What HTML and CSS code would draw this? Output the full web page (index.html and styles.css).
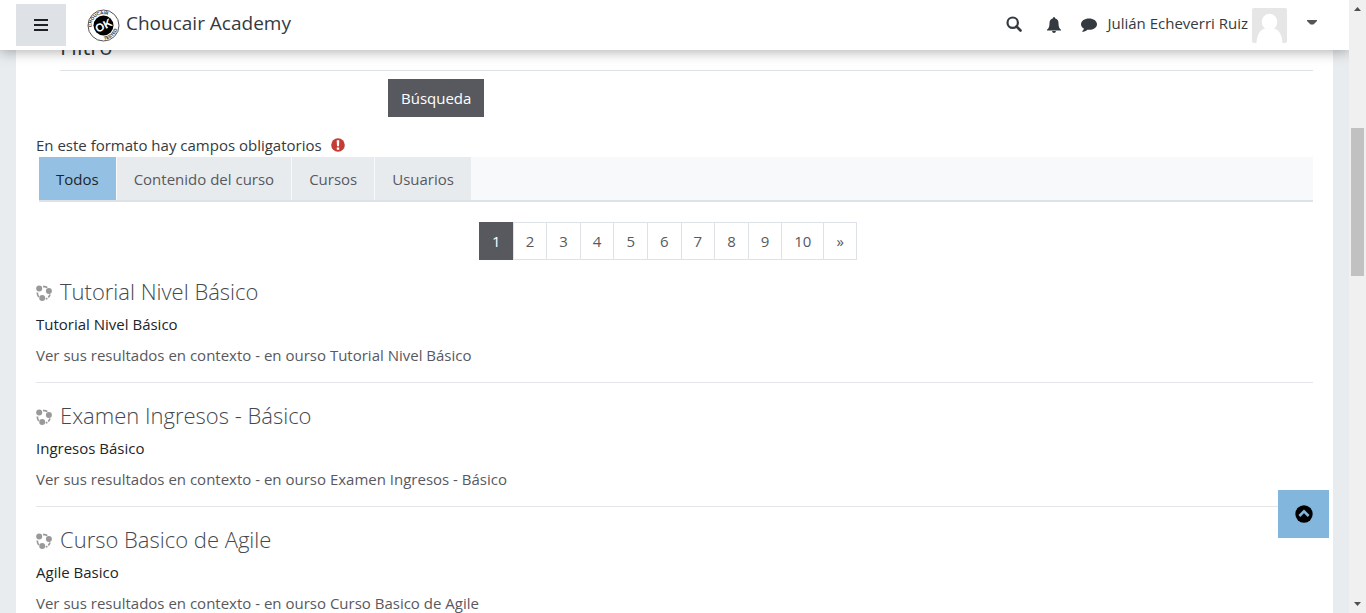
FILE: index.html
```html
<!DOCTYPE html>
<html lang="es">
<head>
<meta charset="utf-8">
<meta name="viewport" content="width=device-width, initial-scale=1">
<title>Choucair Academy: Búsqueda</title>
<link rel="stylesheet" href="styles.css">
</head>
<body>
<svg class="sprite" aria-hidden="true">
  <symbol id="course" viewBox="0 0 16 16">
    <path d="M7 1.700Q9.500 1.200 11.300 2.600M1.300 7.500Q1.300 10 2.800 12M14 9.500Q13.500 11.300 12.200 12.500M11.300 13.200Q10.500 13.800 9.800 14" fill="none" stroke="#999" stroke-width="1.700"/>
    <circle cx="3.200" cy="3.500" r="3" fill="#999"/>
    <circle cx="12.900" cy="6" r="3" fill="#999"/>
    <circle cx="6.200" cy="13" r="3" fill="#999"/>
  </symbol>
</svg>
<div class="frame">
  <div class="page">
    <header class="navbar">
      <button class="menu" type="button" aria-label="Panel lateral">
        <svg width="14" height="12" viewBox="0 0 14 12"><path d="M0 1h14M0 6h14M0 11h14" stroke="#1d2125" stroke-width="2"/></svg>
      </button>
      <a class="brand" href="#">
        <svg width="33" height="33" viewBox="0 0 66 66" aria-hidden="true">
          <defs>
            <path id="arc-top" d="M11 44A24 24 0 1 1 55 44"/>
            <path id="arc-bottom" d="M30 61A28 28 0 0 0 61 30"/>
          </defs>
          <circle cx="33" cy="33" r="31" fill="#fff" stroke="#555" stroke-width="2"/>
          <circle cx="33" cy="33" r="20" fill="#000"/>
          <text class="seal"><textPath href="#arc-top" startOffset="8">CHOUCAIR</textPath></text>
          <text class="seal"><textPath href="#arc-bottom" startOffset="4">TESTED</textPath></text>
          <text class="seal-ok" x="33" y="41" text-anchor="middle" transform="rotate(-28 33 33)">OK</text>
        </svg>
        <span>Choucair Academy</span>
      </a>
      <div class="tools">
        <button class="icon search" type="button" aria-label="Buscar">
          <svg width="16" height="16" viewBox="0 0 16 16"><circle cx="6.700" cy="6.700" r="5.200" fill="none" stroke="#343a40" stroke-width="2.200"/><path d="M10.500 10.500l4 4" stroke="#343a40" stroke-width="2.600" stroke-linecap="round"/></svg>
        </button>
        <button class="icon bell" type="button" aria-label="Notificaciones">
          <svg width="16" height="16" viewBox="0 0 16 16"><path d="M8 0q1 0 1 1.300Q12.500 2.200 12.500 6.200C12.500 10 13.500 11.500 15 12.700V13.500H1V12.700C2.500 11.500 3.500 10 3.500 6.200Q3.500 2.200 7 1.300Q7 0 8 0zM6 14h4q-.3 2-2 2t-2-2z" fill="#343a40"/></svg>
        </button>
        <button class="icon chat" type="button" aria-label="Mensajes">
          <svg width="16" height="16" viewBox="0 0 16 16"><path d="M8 1.600c4.400 0 8 2.400 8 5.600s-3.600 5.600-8 5.600q-.8 0-1.600-.1C4.800 14.100 3 14.700 1.400 14.800q-.5-.1-.1-.6C2.200 13.300 2.700 12.600 2.900 11.500 1.100 10.500 0 9 0 7.200 0 4 3.600 1.600 8 1.600z" fill="#343a40"/></svg>
        </button>
        <button class="user" type="button">
          <span>Julián Echeverri Ruiz</span>
          <svg class="avatar" width="35" height="35" viewBox="0 0 35 35" aria-hidden="true"><rect width="35" height="35" fill="#e6e6e6"/><ellipse cx="17.500" cy="14" rx="7.800" ry="8.200" fill="#fff"/><path d="M4.500 35C5 25 9 21 14 20.500h7C26 21 30 25 30.500 35z" fill="#fff"/></svg>
          <svg class="caret" width="10" height="5" viewBox="0 0 10 5" aria-hidden="true"><path d="M0 0h10v1L6.500 4.500h-3L0 1z" fill="#555"/></svg>
        </button>
      </div>
    </header>

    <main class="content">
      <form class="filter">
        <h3 class="filter-title">Filtro</h3>
        <div class="filter-actions"><button class="submit" type="submit">Búsqueda</button></div>
      </form>
      <p class="required">En este formato hay campos obligatorios
        <svg width="14" height="14" viewBox="0 0 14 14" role="img" aria-label="Obligatorio"><circle cx="7" cy="7" r="6.800" fill="#c43d35"/><path d="M5.700 2.200h2.600L8 8.300H6zM5.800 9.500h2.400v2.200H5.800z" fill="#fff"/></svg>
      </p>
      <nav class="tabs" aria-label="Áreas">
        <a class="tab active" href="#">Todos</a>
        <a class="tab" href="#">Contenido del curso</a>
        <a class="tab" href="#">Cursos</a>
        <a class="tab" href="#">Usuarios</a>
      </nav>
      <nav class="pages" aria-label="Página">
        <a class="num current" href="#">1</a><a class="num" href="#">2</a><a class="num" href="#">3</a><a class="num" href="#">4</a><a class="num" href="#">5</a><a class="num" href="#">6</a><a class="num" href="#">7</a><a class="num" href="#">8</a><a class="num" href="#">9</a><a class="num" href="#">10</a><a class="num" href="#">»</a>
      </nav>
      <section class="results">
        <article class="result">
          <h4 class="title"><svg width="16" height="16" aria-hidden="true"><use href="#course"/></svg><a href="#">Tutorial Nivel Básico</a></h4>
          <p class="summary">Tutorial Nivel Básico</p>
          <a class="context" href="#">Ver sus resultados en contexto - en ourso Tutorial Nivel Básico</a>
        </article>
        <article class="result">
          <h4 class="title"><svg width="16" height="16" aria-hidden="true"><use href="#course"/></svg><a href="#">Examen Ingresos - Básico</a></h4>
          <p class="summary">Ingresos Básico</p>
          <a class="context" href="#">Ver sus resultados en contexto - en ourso Examen Ingresos - Básico</a>
        </article>
        <article class="result">
          <h4 class="title"><svg width="16" height="16" aria-hidden="true"><use href="#course"/></svg><a href="#">Curso Basico de Agile</a></h4>
          <p class="summary">Agile Basico</p>
          <a class="context" href="#">Ver sus resultados en contexto - en ourso Curso Basico de Agile</a>
        </article>
      </section>
    </main>
    <button class="to-top" type="button" aria-label="Subir">
      <svg width="18" height="18" viewBox="0 0 18 18"><circle cx="9" cy="9" r="8.700" fill="#000"/><path d="M4.400 11L9 6.400l4.600 4.600" fill="none" stroke="#82b6dc" stroke-width="2.600"/></svg>
    </button>
  </div>
  <div class="scrollbar" aria-hidden="true">
    <svg width="7" height="4" viewBox="0 0 7 4"><path d="M0 4L3.500 0 7 4z" fill="#505050"/></svg>
    <div class="track"><div class="thumb"></div></div>
    <svg width="7" height="4" viewBox="0 0 7 4"><path d="M0 0L3.500 4 7 0z" fill="#505050"/></svg>
  </div>
</div>
</body>
</html>
```

FILE: styles.css
```css
* { box-sizing: border-box; }
body {
  margin: 0;
  font-family: "Open Sans", "Noto Sans", sans-serif;
  font-size: 15px;
  line-height: 24px;
  color: #343a40;
  background: #e8ecef;
}
a { color: inherit; text-decoration: none; }
button { font: inherit; color: inherit; border: 0; padding: 0; background: none; cursor: pointer; }
p, h3, h4 { margin: 0; }
svg { display: block; flex: none; }
.sprite { position: absolute; width: 0; height: 0; }

.frame { display: flex; height: 100vh; overflow: hidden; }
.page { position: relative; flex: 1; min-width: 0; overflow: hidden; padding: 0 16px; }

.navbar {
  position: absolute;
  top: 0;
  left: 0;
  right: 0;
  z-index: 2;
  display: flex;
  align-items: center;
  height: 50px;
  padding: 0 32px 0 16px;
  background: #fff;
  box-shadow: 0 2px 12px rgba(0, 0, 0, .3);
}
.menu { display: grid; place-items: center; width: 50px; height: 42px; background: #dee2e6; }
.brand { display: flex; align-items: center; gap: 6px; margin-left: 21px; font-size: 19px; white-space: nowrap; }
.brand span { padding-bottom: 4px; }
.seal { font: bold 9px "Liberation Sans", sans-serif; fill: #222; }
.seal-ok { font: bold 23px "Liberation Sans", sans-serif; fill: #fff; }
.tools { display: flex; align-items: center; margin-left: auto; }
.icon { display: grid; place-items: center; width: 16px; margin-right: 24px; }
.search { padding-bottom: 2px; }
.bell { margin-right: 19px; }
.chat { margin-right: 10px; }
.user { display: flex; align-items: center; white-space: nowrap; }
.user span { padding-bottom: 4px; }
.avatar { margin: 0 20px 0 4px; border-radius: 2px; }
.caret { margin-bottom: 6px; }

.content { height: 100%; padding: 30px 20px 0; background: #fff; }
.filter { padding-left: 24px; }
.filter-title { padding-bottom: 8px; border-bottom: 1px solid #dee2e6; font-size: 22px; font-weight: 400; line-height: 32px; }
.filter-actions { display: flex; padding: 8px 0 0 328px; }
.submit { height: 38px; padding: 0 13px; background: #58595f; color: #fff; }
.required { display: flex; align-items: center; gap: 9px; padding-top: 16px; }
.tabs { display: flex; gap: 1px; margin-left: 3px; background: #f8f9fb; border-bottom: 2px solid #dee2e6; }
.tab { padding: 10px 17px 9px; background: #e8ebee; color: #58595f; }
.tab.active { background: #94c1e3; color: #212529; }

.pages { display: flex; justify-content: center; padding: 20px 14px 15px 0; }
.num { margin-right: -1px; padding: 6px 12px; border: 1px solid #dee2e6; color: #58595f; }
.num.current { background: #58595f; border-color: #58595f; color: #fff; }

.result { padding-bottom: 15px; }
.result + .result { border-top: 1px solid #e3e5e8; padding-top: 16px; }
.title { display: flex; align-items: center; gap: 8px; font-size: 22px; font-weight: 300; line-height: 32px; color: #45494e; }
.title svg { margin-top: 4px; }
.summary { padding-top: 5px; color: #212529; }
.context { display: block; padding-top: 7px; color: #58595f; }

.to-top {
  position: absolute;
  right: 20px;
  bottom: 75px;
  display: grid;
  place-items: center;
  width: 51px;
  height: 48px;
  background: #82b6dc;
}

.scrollbar { display: flex; flex-direction: column; align-items: center; flex: none; width: 17px; padding: 7px 0; background: #f0f0f0; }
.track { display: flex; flex: 1; flex-direction: column; }
.thumb { width: 13px; height: 148px; margin-top: 117px; background: #c1c1c1; }
```
